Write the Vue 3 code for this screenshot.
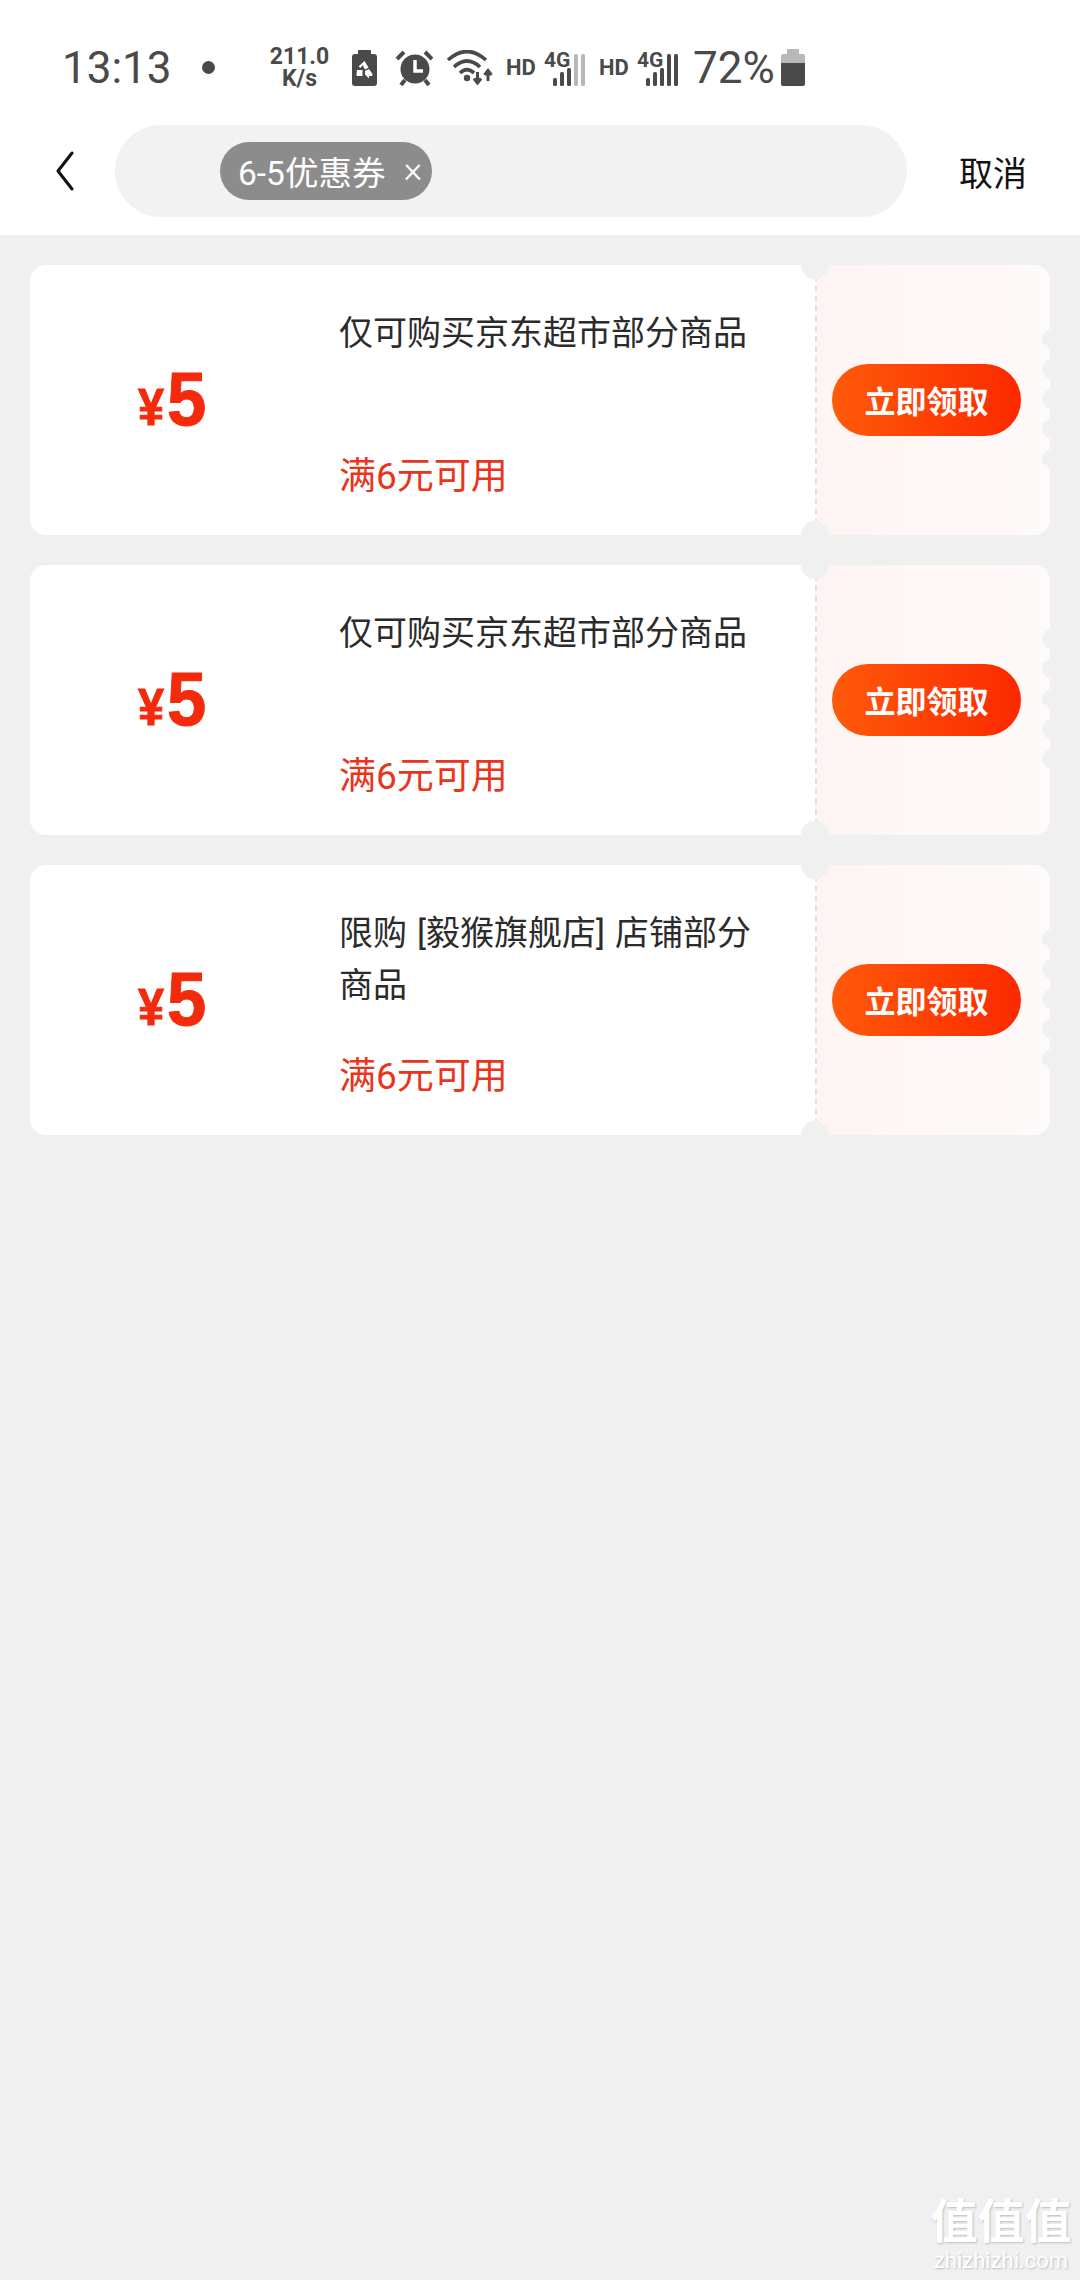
<script setup>
const coupons = [
  { id: 1, title: '仅可购买京东超市部分商品' },
  { id: 2, title: '仅可购买京东超市部分商品' },
  { id: 3, title: '限购 [毅猴旗舰店] 店铺部分商品' }
]
const scallops = [0, 1, 2, 3, 4]
</script>

<template>
  <div class="page">
    <header class="top">
      <div class="status">
        <span class="time">13:13</span>
        <span class="dot"></span>
        <span class="speed"><b>211.0</b><b>K/s</b></span>
        <svg class="saver" width="25" height="36" viewBox="0 0 25 36">
          <rect x="6" y="0" width="13" height="8" rx="1" fill="#4a4a4a" />
          <rect x="0" y="4" width="25" height="32" rx="3" fill="#4a4a4a" />
          <path d="M12.500 11 L16.500 17.500 L13 19.500 L10.500 15 L8.500 18 L6.500 16.500 Z M5 20 L10.500 20 L10.500 26 L6.500 26 Q4 26 4.500 24 Z M13 21 L17 19 L20.500 24 Q21 26 18.500 26 L17 26 L17 28.500 L13 24.500 Z" fill="#fff" />
        </svg>
        <svg class="alarm" width="38" height="36" viewBox="0 0 38 36">
          <circle cx="20" cy="19" r="14.500" fill="#4a4a4a" />
          <path d="M20 10 V21 H28" fill="none" stroke="#fff" stroke-width="3.500" />
          <path d="M2 9 L9 2 M37 9 L30 2 M6 35 L10 30 M34 35 L30 30" fill="none" stroke="#4a4a4a" stroke-width="4" />
        </svg>
        <svg class="wifi" width="48" height="36" viewBox="0 0 48 36">
          <path d="M1 10 Q20 -7 39 10 M7 17 Q20 5 33 17 M13 23 Q20 16 27 23" fill="none" stroke="#4a4a4a" stroke-width="3.600" />
          <circle cx="20" cy="28" r="3.200" fill="#4a4a4a" />
          <path d="M30.500 22 V32 M27 28.500 L30.500 33 L34 28.500 M41 31 V21 M37.500 25 L41 20.500 L44.500 25" fill="none" stroke="#4a4a4a" stroke-width="3" />
        </svg>
        <span class="hd hd-first">HD</span>
        <svg class="signal signal-first" width="41" height="40" viewBox="0 -4 41 40">
          <text x="0" y="17" class="net">4G</text>
          <rect x="9" y="28" width="4" height="8" rx="1.500" fill="#4a4a4a" />
          <rect x="16" y="22" width="4" height="14" rx="1.500" fill="#4a4a4a" />
          <rect x="23" y="18" width="4" height="18" rx="1.500" fill="#4a4a4a" />
          <rect x="30" y="4" width="4" height="32" rx="1.500" fill="#b8b8b8" />
          <rect x="37" y="4" width="4" height="32" rx="1.500" fill="#b8b8b8" />
        </svg>
        <span class="hd hd-second">HD</span>
        <svg class="signal signal-second" width="41" height="40" viewBox="0 -4 41 40">
          <text x="0" y="17" class="net">4G</text>
          <rect x="9" y="28" width="4" height="8" rx="1.500" fill="#4a4a4a" />
          <rect x="16" y="22" width="4" height="14" rx="1.500" fill="#4a4a4a" />
          <rect x="23" y="18" width="4" height="18" rx="1.500" fill="#4a4a4a" />
          <rect x="30" y="4" width="4" height="32" rx="1.500" fill="#4a4a4a" />
          <rect x="37" y="4" width="4" height="32" rx="1.500" fill="#4a4a4a" />
        </svg>
        <span class="percent">72%</span>
        <svg class="battery" width="24" height="37" viewBox="0 0 24 37">
          <path d="M6 0 H18 V5 H22 Q24 5 24 7 V14 H0 V7 Q0 5 2 5 H6 Z" fill="#b8b8b8" />
          <path d="M0 14 H24 V35 Q24 37 22 37 H2 Q0 37 0 35 Z" fill="#4a4a4a" />
        </svg>
      </div>
      <div class="search-row">
        <svg class="back" width="19" height="40" viewBox="0 0 19 40">
          <path d="M17 2 L3 20 L17 38" fill="none" stroke="#111" stroke-width="3" stroke-linecap="round" stroke-linejoin="round" />
        </svg>
        <div class="search">
          <div class="tag">
            <span>6-5优惠券</span>
            <span class="tag-x">×</span>
          </div>
        </div>
        <span class="cancel">取消</span>
      </div>
    </header>

    <main class="list">
      <article v-for="coupon in coupons" :key="coupon.id" class="coupon">
        <div class="amount">
          <span class="yen">¥</span><span class="value">5</span>
        </div>
        <div class="info">
          <p class="title">{{ coupon.title }}</p>
          <p class="limit">满6元可用</p>
        </div>
        <div class="stub">
          <button class="claim">立即领取</button>
          <span v-for="n in scallops" :key="n" class="scallop" :style="{ top: 64 + n * 30 + 'px' }"></span>
        </div>
        <span class="notch notch-top"></span>
        <span class="notch notch-bottom"></span>
      </article>
    </main>

    <div class="watermark">
      <span class="wm-big">值值值</span>
      <span class="wm-small">zhizhizhi.com</span>
    </div>
  </div>
</template>

<style scoped>
.page {
  position: relative;
  height: 2280px;
  overflow: hidden;
  background: #f0f0f0;
  font-family: Roboto, "Noto Sans CJK SC", sans-serif;
}

.top {
  height: 235px;
  background: #fff;
}

.status {
  display: flex;
  align-items: center;
  height: 125px;
  padding-top: 10px;
  padding-left: 62px;
  box-sizing: border-box;
  color: #4a4a4a;
}

.status > * {
  flex: none;
}

.time {
  width: 110px;
  font-size: 44px;
  line-height: 50px;
  white-space: nowrap;
}

.dot {
  width: 13px;
  height: 13px;
  margin-left: 30px;
  border-radius: 50%;
  background: #4a4a4a;
}

.speed {
  display: flex;
  flex-direction: column;
  align-items: center;
  width: 61px;
  margin-left: 54px;
  font-size: 23px;
  line-height: 22px;
}

.speed b {
  font-weight: 700;
}

.saver {
  margin-left: 22px;
}

.alarm {
  margin-left: 18px;
}

.wifi {
  margin-left: 14px;
}

.hd {
  width: 29px;
  font-size: 22px;
  font-weight: 700;
  line-height: 24px;
  white-space: nowrap;
}

.hd-first {
  margin-left: 11px;
}

.hd-second {
  margin-left: 14px;
}

.signal {
  margin-top: -4px;
  margin-left: 9px;
}

.net {
  font-size: 21px;
  font-weight: 700;
  fill: #4a4a4a;
}

.percent {
  width: 81px;
  margin-left: 15px;
  font-size: 44px;
  line-height: 50px;
  white-space: nowrap;
}

.battery {
  margin-left: 7px;
}

.search-row {
  display: flex;
  align-items: center;
  height: 92px;
}

.back {
  flex: none;
  margin-left: 55px;
}

.search {
  flex: none;
  display: flex;
  align-items: center;
  width: 792px;
  height: 92px;
  margin-left: 41px;
  padding-left: 105px;
  box-sizing: border-box;
  border-radius: 46px;
  background: #f2f2f2;
}

.tag {
  display: flex;
  align-items: center;
  width: 212px;
  height: 58px;
  padding: 0 0 2px 18px;
  box-sizing: border-box;
  border-radius: 29px;
  background: #8c8c8c;
  color: #fff;
  font-size: 33.500px;
  white-space: nowrap;
}

.tag-x {
  margin-left: 18px;
  font-size: 36px;
  font-weight: 300;
}

.cancel {
  margin-left: 52px;
  color: #111;
  font-size: 34px;
}

.list {
  display: flex;
  flex-direction: column;
  gap: 30px;
  padding: 30px;
}

.coupon {
  position: relative;
  display: flex;
  height: 270px;
  border-radius: 16px;
  background: #fff;
}

.amount {
  display: flex;
  align-items: baseline;
  width: 310px;
  padding-left: 108px;
  padding-top: 96px;
  box-sizing: border-box;
  color: #f42a0c;
  font-weight: 700;
  font-family: "Liberation Sans", sans-serif;
  -webkit-text-stroke: 1px #f42a0c;
}

.yen {
  font-size: 52px;
  line-height: 76px;
  transform: scaleX(0.9);
  transform-origin: left center;
}

.value {
  font-size: 76px;
  line-height: 76px;
  transform: scaleX(0.93);
  transform-origin: left center;
}

.info {
  display: flex;
  flex-direction: column;
  justify-content: space-between;
  width: 476px;
  margin-left: -1px;
  padding: 42px 60px 32px 0;
  box-sizing: border-box;
}

.title {
  margin: 0;
  color: #2b2b2b;
  font-size: 34px;
  line-height: 52px;
  word-spacing: 1.500px;
}

.limit {
  margin: 0;
  color: #e8351c;
  font-size: 37px;
  line-height: 52px;
}

.stub {
  position: relative;
  flex: 1;
  display: flex;
  align-items: center;
  padding-left: 15px;
  border-left: 2px dashed #e8dcdc;
  border-radius: 0 16px 16px 0;
  background: linear-gradient(90deg, #fef5f3, #fefaf9);
}

.claim {
  width: 189px;
  height: 72px;
  padding: 0 0 2px;
  border: 0;
  border-radius: 36px;
  background: linear-gradient(90deg, #ff5a0a, #fb2900);
  color: #fff;
  font-family: inherit;
  font-size: 31px;
  font-weight: 700;
}

.scallop {
  position: absolute;
  right: -12px;
  width: 20px;
  height: 20px;
  border-radius: 50%;
  background: #f0f0f0;
}

.notch {
  position: absolute;
  left: 771px;
  width: 28px;
  height: 28px;
  border-radius: 50%;
  background: #f0f0f0;
}

.notch-top {
  top: -14px;
}

.notch-bottom {
  bottom: -14px;
}

.watermark {
  position: absolute;
  right: 8px;
  bottom: 6px;
  display: flex;
  flex-direction: column;
  align-items: center;
  width: 142px;
  color: #fff;
  text-shadow: 1px 1px 2px #bdbdbd;
}

.wm-big {
  font-size: 47px;
  font-weight: 700;
  line-height: 52px;
  white-space: nowrap;
}

.wm-small {
  font-size: 22px;
  line-height: 26px;
  white-space: nowrap;
}
</style>

<style>
html,
body {
  margin: 0;
  background: #f0f0f0;
}
</style>
